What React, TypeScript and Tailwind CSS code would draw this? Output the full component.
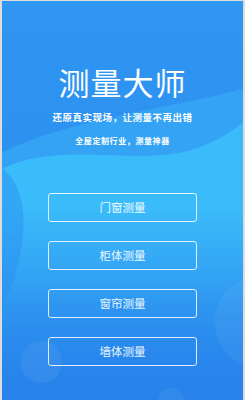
import React from 'react';

const BUTTONS = ['门窗测量', '柜体测量', '窗帘测量', '墙体测量'];

function Backdrop() {
  return (
    <svg className="absolute inset-0 h-full w-full" viewBox="0 0 245 400" preserveAspectRatio="none">
      <defs>
        <linearGradient id="base" x1="0" y1="0" x2="0" y2="1">
          <stop offset="0" stopColor="#2f96f1" />
          <stop offset="0.5" stopColor="#2c8ff0" />
          <stop offset="1" stopColor="#2783eb" />
        </linearGradient>
        <linearGradient id="wave1" x1="0" y1="0" x2="0" y2="1">
          <stop offset="0.22" stopColor="#35a6f5" stopOpacity="0.85" />
          <stop offset="0.7" stopColor="#35a6f5" stopOpacity="0" />
        </linearGradient>
        <linearGradient id="wave2" x1="0" y1="0" x2="0" y2="1">
          <stop offset="0.3" stopColor="#3bbcfa" stopOpacity="1" />
          <stop offset="0.6" stopColor="#36aef7" stopOpacity="0.5" />
          <stop offset="0.9" stopColor="#2f96f1" stopOpacity="0" />
        </linearGradient>
      </defs>
      <rect width="245" height="400" fill="url(#base)" />
      <path d="M0 152 C 70 118 160 110 245 88 L245 400 L0 400 Z" fill="url(#wave1)" />
      <path d="M0 168 C 60 140 130 165 190 150 C 215 143 232 132 245 122 L245 400 L0 400 Z" fill="url(#wave2)" />
      <path d="M0 168 C 25 185 30 230 8 290 L0 300 Z" fill="#2b8ef0" fillOpacity="0.45" />
      <circle cx="40" cy="362" r="21" fill="#ffffff" fillOpacity="0.06" />
      <circle cx="262" cy="322" r="46" fill="#ffffff" fillOpacity="0.05" />
      <circle cx="172" cy="402" r="14" fill="#ffffff" fillOpacity="0.05" />
    </svg>
  );
}

export default function App() {
  return (
    <div
      className="relative h-[400px] w-[245px] overflow-hidden border-x-2 border-t border-[#dcdcdc]"
      style={{ fontFamily: '"Noto Sans CJK SC", "Noto Sans", sans-serif' }}
    >
      <Backdrop />
      <div className="relative flex flex-col items-center pt-[62px] text-white">
        <h1 className="text-[31px] leading-[38px] font-normal tracking-[1px]">测量大师</h1>
        <p className="mt-[10px] text-[9.5px] leading-[12px] font-bold tracking-[0.5px]">还原真实现场，让测量不再出错</p>
        <p className="mt-[12px] text-[8px] leading-[12px] font-bold tracking-[0.6px]">全屋定制行业，测量神器</p>
        <div className="mt-[46px] flex flex-col gap-[19px]">
          {BUTTONS.map((label) => (
            <button
              key={label}
              className="flex h-[29px] w-[149px] items-center justify-center rounded-[3px] border-[1.5px] border-white/85 text-[11.5px] text-white/90"
            >
              {label}
            </button>
          ))}
        </div>
      </div>
    </div>
  );
}
